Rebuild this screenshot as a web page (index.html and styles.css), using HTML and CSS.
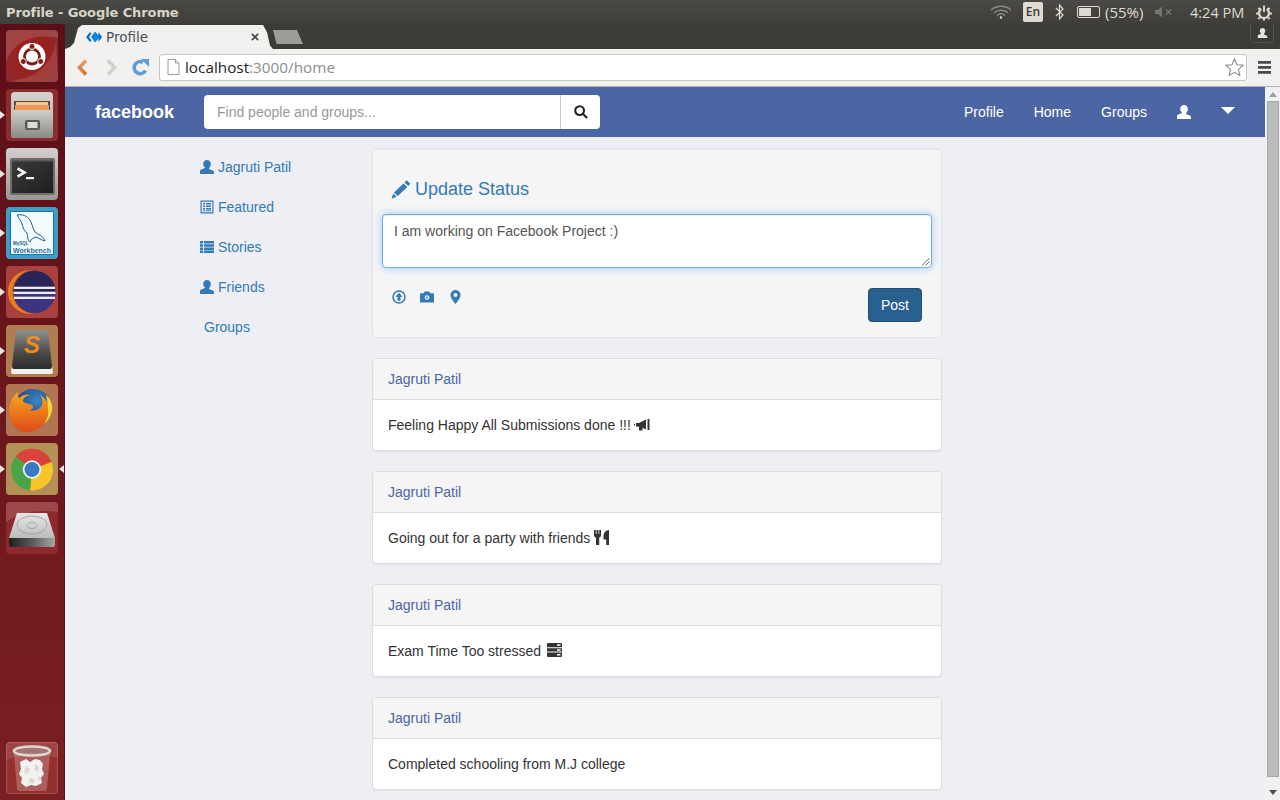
FILE: index.html
```html
<!DOCTYPE html>
<html lang="en">
<head>
<meta charset="utf-8">
<title>Profile</title>
<link rel="stylesheet" href="styles.css">
</head>
<body>
<svg class="defs" width="0" height="0" aria-hidden="true">
  <defs>
    <symbol id="i-user" viewBox="0 0 14 14"><path d="M7 0c2.400 0 3.800 1.700 3.800 4 0 1.700-.7 3.100-1.600 3.800v1c0 .5 1.100.9 2.300 1.300 1.500.5 2.200 1 2.500 1.900V14H0v-3c.3-.9 1-1.400 2.500-1.900 1.200-.4 2.300-.8 2.300-1.300v-1C3.900 7.100 3.200 5.700 3.200 4 3.200 1.700 4.600 0 7 0z"/></symbol>
    <symbol id="i-list" viewBox="0 0 14 12"><path d="M0 0h3v2.500H0zM4 0h10v2.500H4zM0 3.200h3v2.500H0zM4 3.200h10v2.500H4zM0 6.400h3v2.500H0zM4 6.400h10v2.500H4zM0 9.500h3V12H0zM4 9.500h10V12H4z"/></symbol>
    <symbol id="i-news" viewBox="0 0 14 14"><path fill-rule="evenodd" d="M0.500 0.500h13v13h-13zM1.700 1.700v10.600h10.600V1.700zM3 3h2v1.500H3zM6 3h5v1.500H6zM3 5.500h2V7H3zM6 5.500h5V7H6zM3 8h2v1.500H3zM6 8h5v1.500H6zM3 10.300h2v1H3zM6 10.300h5v1H6z"/></symbol>
    <symbol id="i-pencil" viewBox="0 0 20 19"><path d="M15.500 0.300l3.800 3.500-2 2.100-3.800-3.500zM12.500 3.400l3.800 3.500-9.500 9.100-3.800-3.500zM2.300 13.600l3.400 3.100L0.500 18.800z"/></symbol>
  </defs>
</svg>

<div class="screen">
  <header class="sysbar">
    <span class="win-title">Profile - Google Chrome</span>
    <div class="tray">
      <svg class="t-wifi" width="22" height="14" viewBox="0 0 22 14" fill="none" stroke="#8f8d87" stroke-width="1.300"><path d="M1 5c5.500-5 14.500-5 20 0M4 7.800c3.800-3.400 10.200-3.400 14 0M7 10.400c2.300-1.900 5.700-1.900 8 0"/><circle cx="11" cy="12.500" r="1.200" fill="#dfdbd2" stroke="none"/></svg>
      <span class="t-en">En</span>
      <svg class="t-bt" width="9" height="16" viewBox="0 0 9 16" fill="none" stroke="#dfdbd2" stroke-width="1.200"><path d="M1 4l7 7-3.500 4V1L8 5 1 12"/></svg>
      <span class="t-bat"><span class="t-bat-fill"></span></span>
      <span class="t-pct">(55%)</span>
      <svg class="t-mute" width="18" height="12" viewBox="0 0 18 12"><path d="M0 4h3l4-3.500v11L3 8H0z" fill="#77756f"/><path d="M11 3.500l5 5M16 3.500l-5 5" stroke="#77756f" stroke-width="1.500"/></svg>
      <span class="t-time">4:24 PM</span>
      <svg class="t-gear" width="16" height="17" viewBox="0 0 17 17" fill="none" stroke="#dfdbd2"><path d="M5.600 4.700a5.300 5.300 0 1 0 5.800 0" stroke-width="2.400"/><path d="M8.500 1v7" stroke-width="2"/><path d="M2.600 3.600l1.600 1.600M14.400 3.600l-1.600 1.600M0 9.500h2M15 9.500h2M2.500 15.500l1.600-1.600M14.500 15.500l-1.600-1.600M8.500 15.500v1.500" stroke-width="2.200"/></svg>
    </div>
  </header>

  <div class="desktop">
    <nav class="launcher">
      <div class="tile">
        <svg width="52" height="52" viewBox="0 0 52 52"><defs><radialGradient id="gu" cx=".5" cy=".5" r=".7"><stop offset="0" stop-color="#a51818"/><stop offset="1" stop-color="#8a2c2c"/></radialGradient></defs><rect width="52" height="52" rx="4" fill="url(#gu)"/><path d="M0 32C8 10 30 3 52 8V4q0-4-4-4H4Q0 0 0 4z" fill="#fff" opacity=".14"/><path d="M8 50C30 48 46 34 50 12l2 36q0 4-4 4H10z" fill="#fff" opacity=".12"/><circle cx="26" cy="26.500" r="13.500" fill="#fff"/><circle cx="26" cy="26.500" r="7.500" fill="none" stroke="#7d1c1c" stroke-width="2.800"/><circle cx="26" cy="16.500" r="3" fill="#7d1c1c" stroke="#fff"/><circle cx="17.300" cy="31.500" r="3" fill="#7d1c1c" stroke="#fff"/><circle cx="34.700" cy="31.500" r="3" fill="#7d1c1c" stroke="#fff"/></svg>
      </div>
      <div class="tile has-pip">
        <svg width="52" height="52" viewBox="0 0 52 52"><defs><linearGradient id="gf" x1="0" y1="0" x2="0" y2="1"><stop offset="0" stop-color="#d2d0cc"/><stop offset="1" stop-color="#8c8985"/></linearGradient><linearGradient id="gf2" x1="0" y1="0" x2="0" y2="1"><stop offset="0" stop-color="#d6d4d0"/><stop offset="1" stop-color="#a8a6a2"/></linearGradient></defs><rect width="52" height="52" rx="4" fill="#8c2c2c"/><path d="M5 7q0-4 4-4h34q4 0 4 4v39q0 2-2 2H7q-2 0-2-2z" fill="url(#gf2)"/><rect x="8" y="12" width="36" height="11" fill="#5f4b3a"/><rect x="10" y="13" width="32" height="3" fill="#f6c48e"/><rect x="9" y="16" width="34" height="6" fill="#eb9a58"/><rect x="5" y="21" width="42" height="28" rx="2" fill="url(#gf)"/><rect x="19" y="31" width="15" height="10" rx="2" fill="#5c5a56"/><rect x="21.500" y="33" width="10" height="6" fill="#dedcd8"/></svg>
      </div>
      <div class="tile has-pip">
        <svg width="52" height="52" viewBox="0 0 52 52"><defs><linearGradient id="gt" x1="0" y1="0" x2="0" y2="1"><stop offset="0" stop-color="#d2d0cd"/><stop offset="1" stop-color="#999694"/></linearGradient><linearGradient id="gt2" x1="0" y1="0" x2="1" y2="1"><stop offset="0" stop-color="#3c3b3a"/><stop offset="1" stop-color="#1f1e1e"/></linearGradient></defs><rect width="52" height="52" rx="4" fill="url(#gt)"/><rect x="4" y="10" width="45" height="37" rx="2" fill="#6f6d6a"/><rect x="6" y="12" width="41" height="33" fill="url(#gt2)"/><rect x="6" y="12" width="41" height="1.500" fill="#58565a"/><path d="M11.500 20.500l7 4-7 4" fill="none" stroke="#f2f2f2" stroke-width="2.600"/><rect x="20" y="29" width="8" height="2.200" fill="#f2f2f2"/></svg>
      </div>
      <div class="tile has-pip">
        <svg width="52" height="52" viewBox="0 0 52 52"><rect width="52" height="52" rx="4" fill="#3f9ec4"/><rect x="4" y="4" width="44" height="44" rx="1" fill="#0f78b0"/><rect x="5" y="5" width="42" height="42" fill="#f4fbfe"/><path d="M11 8c6-1 10 1 13 5 2 3 2 7 5 12 3 3 8 3 10 9-4-1-6-3-9-4-3 1-5 2-6 5-3-2-2-6-3-9-3-2-4-5-5-9-1-3-3-6-5-9z" fill="none" stroke="#1c5f8e" stroke-width="1"/><text class="wb-my" x="7" y="38">MySQL</text><text class="wb-text" x="7" y="45.500" textLength="38" lengthAdjust="spacingAndGlyphs">Workbench</text></svg>
      </div>
      <div class="tile has-pip">
        <svg width="52" height="52" viewBox="0 0 52 52"><rect width="52" height="52" rx="4" fill="#a9413f"/><circle cx="24" cy="26" r="22" fill="#e8801c"/><circle cx="28.500" cy="25.700" r="22" fill="#a9413f"/><circle cx="28.500" cy="25.700" r="21" fill="#2a2558"/><path d="M7.500 26a21 21 0 0 0 42 0z" fill="#3d3480"/><rect x="8" y="20.700" width="41" height="2.300" fill="#eeedf5"/><rect x="7.500" y="25.700" width="42" height="2.300" fill="#eeedf5"/><rect x="8" y="30.700" width="41" height="2.300" fill="#eeedf5"/></svg>
      </div>
      <div class="tile has-pip">
        <svg width="52" height="52" viewBox="0 0 52 52"><defs><linearGradient id="gs" x1="0" y1="0" x2="0" y2="1"><stop offset="0" stop-color="#8f8f8c"/><stop offset=".6" stop-color="#484847"/><stop offset="1" stop-color="#2c2c2b"/></linearGradient></defs><rect width="52" height="52" rx="4" fill="#ae7d50"/><path d="M6 40h40l1 7q0 2-2 2H7q-2 0-2-2z" fill="#f0f0ee"/><path d="M12 5h28q2 0 2 2l4 34q0 3-2 3H8q-2 0-2-3l4-34q0-2 2-2z" fill="url(#gs)"/><text class="sub-s" x="26" y="28">S</text></svg>
      </div>
      <div class="tile has-pip">
        <svg width="52" height="52" viewBox="0 0 52 52"><defs><linearGradient id="gx" x1="0" y1="0" x2="0" y2="1"><stop offset="0" stop-color="#f7a81f"/><stop offset="1" stop-color="#dd4a18"/></linearGradient><radialGradient id="gb" cx=".6" cy=".3" r=".6"><stop offset="0" stop-color="#3a86c8"/><stop offset="1" stop-color="#1c3f7c"/></radialGradient></defs><rect width="52" height="52" rx="4" fill="#b27551"/><circle cx="27" cy="24" r="19" fill="url(#gb)"/><path d="M12 8c-1 3 0 5 1 6 3-3 7-4 11-3-4 1-7 3-7 6 2 3 6 2 9 4 2 2 1 4-2 5 5 2 10-1 12-5 1-3 0-8-2-10 6 3 10 10 9 17-1 10-10 20-22 20C10 48 3 38 3 27c0-7 3-15 9-19z" fill="url(#gx)"/><path d="M40 11c5 4 7 10 6 16-1 5-4 10-8 13 3-5 5-10 4-15 0-5-1-9-2-14z" fill="#fbd13a"/></svg>
      </div>
      <div class="tile has-pip has-active">
        <svg width="52" height="52" viewBox="0 0 52 52"><rect width="52" height="52" rx="4" fill="#b39157"/><path d="M26 26.500L9.700 13.500A21 21 0 0 1 45.600 19z" fill="#d9433a"/><path d="M26 26.500l19.600-7.500A21 21 0 0 1 24 47.500z" fill="#f6c528"/><path d="M26 26.500l-2 21A21 21 0 0 1 9.700 13.500z" fill="#4aa548"/><circle cx="26" cy="26.500" r="9.200" fill="#f3f3f3"/><circle cx="26" cy="26.500" r="7.500" fill="#3a78c4"/></svg>
      </div>
      <div class="tile">
        <svg width="52" height="52" viewBox="0 0 52 52"><defs><linearGradient id="gd" x1="0" y1="0" x2="0" y2="1"><stop offset="0" stop-color="#e6e6e4"/><stop offset="1" stop-color="#bcbcba"/></linearGradient><linearGradient id="gd2" x1="0" y1="0" x2="1" y2="0"><stop offset="0" stop-color="#1f1f1f"/><stop offset=".5" stop-color="#5a5a5a"/><stop offset="1" stop-color="#a5a5a5"/></linearGradient></defs><rect width="52" height="52" rx="4" fill="#8e2a2c"/><path d="M0 20Q20 6 52 10V4Q52 0 48 0H4Q0 0 0 4z" fill="#fff" opacity=".14"/><path d="M11 11h30l8 25H3z" fill="url(#gd)"/><path d="M3 36h46v7q0 2-2 2H5q-2 0-2-2z" fill="url(#gd2)"/><ellipse cx="26" cy="23" rx="15" ry="9" fill="none" stroke="#a5a5a3"/><ellipse cx="26" cy="23.500" rx="5" ry="3" fill="none" stroke="#a5a5a3"/></svg>
      </div>
      <div class="tile tile-trash">
        <svg width="52" height="52" viewBox="0 0 52 52"><rect width="52" height="52" rx="4" fill="#96302f"/><rect x=".5" y=".5" width="51" height="51" rx="4" fill="none" stroke="#fff" stroke-opacity=".15"/><path d="M0 4Q0 0 4 0h44q4 0 4 4v12Q26 8 0 18z" fill="#fff" opacity=".1"/><path d="M8 11l3 35q0 3 3 3h24q3 0 3-3l3-35z" fill="#fff" opacity=".22"/><path d="M14 20l6-3 4 3 5-3 5 1 3 4-1 5 2 5-3 4 1 5-6 3-5-1-5 2-5-4 1-5-3-4 2-5z" fill="#f2f1ef"/><path d="M20 24l4 3-2 5-4-2zM29 22l4 3-1 5-4-2zM24 36l5 1-2 5-4-2zM33 33l2 4-4 2z" fill="#dcd8d5"/><ellipse cx="26" cy="9" rx="18" ry="4.500" fill="#a8a3a0" fill-opacity=".5" stroke="#dcd8d4" stroke-width="2.600"/></svg>
      </div>
    </nav>

    <div class="browser">
      <div class="tabstrip">
        <div class="tab">
          <svg class="tab-ico" width="16" height="12" viewBox="0 0 16 12"><path d="M4 1L0 6l4 5 1.500-1.500L3 6l2.500-3.500z" fill="#0d6fbf"/><path d="M9 0.500l5 5.500-5 5.500-4-5.500z" fill="#1481d8"/><path d="M12.500 1l3.500 5-3.500 5z" fill="#0d6fbf"/></svg>
          <span class="tab-title">Profile</span>
          <svg class="tab-x" width="8" height="8" viewBox="0 0 8 8"><path d="M.8.800l6.400 6.400M7.200.800L.8 7.200" stroke="#4a4a48" stroke-width="1.700"/></svg>
        </div>
        <div class="newtab"></div>
        <div class="profile-btn">
          <svg width="11" height="10" viewBox="0 0 14 14" fill="#e6e4de"><use href="#i-user"/></svg>
        </div>
      </div>

      <div class="toolbar">
        <svg class="tb-back" width="13" height="17" viewBox="0 0 13 17"><defs><linearGradient id="gback" x1="0" y1="0" x2="0" y2="1"><stop offset="0" stop-color="#e9a070"/><stop offset="1" stop-color="#dd6a2c"/></linearGradient></defs><path d="M10 1.500L3.500 8.500 10 15.500" fill="none" stroke="url(#gback)" stroke-width="3.600"/></svg>
        <svg class="tb-fwd" width="13" height="17" viewBox="0 0 13 17"><path d="M3 1.500L9.500 8.500 3 15.500" fill="none" stroke="#d2d0cc" stroke-width="3.600"/></svg>
        <svg class="tb-reload" width="17" height="17" viewBox="0 0 17 17"><path d="M13.500 11.500A6 6 0 1 1 11 3.300" fill="none" stroke="#5c9fd8" stroke-width="3.600"/><path d="M9 0h8v8z" fill="#5c9fd8"/></svg>
        <div class="omnibox">
          <svg class="omni-page" width="13" height="16" viewBox="0 0 13 16"><path d="M1 .5h7.500L12 4v11.500H1z" fill="#fff" stroke="#9c9c9c"/><path d="M8.500.5V4H12" fill="#e8e8e8" stroke="#9c9c9c"/></svg>
          <span class="omni-url"><span class="omni-host">localhost</span>:3000/home</span>
          <svg class="omni-star" width="19" height="18" viewBox="0 0 19 18"><path d="M9.500 1l2.500 5.700 6 .6-4.500 4.100 1.300 6-5.300-3.100-5.300 3.100 1.300-6L1 7.300l6-.6z" fill="#fff" stroke="#8a8a8a" stroke-width="1.100"/></svg>
        </div>
        <svg class="tb-menu" width="13" height="13" viewBox="0 0 13 13"><path d="M0 0h13v2.700H0zM0 5h13v2.700H0zM0 10h13v2.700H0z" fill="#4a4a48"/></svg>
      </div>

      <div class="viewport">
        <div class="page">
          <div class="navbar">
            <a class="brand">facebook</a>
            <form class="search">
              <span class="search-input">Find people and groups...</span>
              <span class="search-btn">
                <svg width="14" height="14" viewBox="0 0 14 14" fill="none" stroke="#222" stroke-width="2.100"><circle cx="5.600" cy="5.600" r="4.400"/><path d="M8.800 8.800l4.300 4.300"/></svg>
              </span>
            </form>
            <ul class="navlinks">
              <li>Profile</li>
              <li>Home</li>
              <li>Groups</li>
              <li><svg class="nav-user" width="14" height="14" fill="#fff"><use href="#i-user"/></svg></li>
              <li><span class="nav-caret"></span></li>
            </ul>
          </div>

          <div class="content">
            <ul class="sidenav">
              <li><svg class="side-ico" width="14" height="14"><use href="#i-user"/></svg>Jagruti Patil</li>
              <li><svg class="side-ico" width="14" height="14"><use href="#i-news"/></svg>Featured</li>
              <li><svg class="side-ico" width="14" height="12"><use href="#i-list"/></svg>Stories</li>
              <li><svg class="side-ico" width="14" height="14"><use href="#i-user"/></svg>Friends</li>
              <li class="side-plain">Groups</li>
            </ul>

            <main class="feed">
              <section class="well">
                <h4 class="well-title"><svg class="pencil" width="20" height="19"><use href="#i-pencil"/></svg>Update Status</h4>
                <div class="status-box">I am working on Facebook Project :)
                  <svg class="grip" width="9" height="9" viewBox="0 0 9 9"><path d="M8.500 1L1 8.500M8.500 4.500L4.500 8.500" stroke="#666" stroke-width="1"/></svg>
                </div>
                <div class="well-foot">
                  <div class="well-icons">
                    <svg width="14" height="14" viewBox="0 0 14 14"><circle cx="7" cy="7" r="6" fill="none" stroke="#337ab7" stroke-width="1.500"/><path d="M7 2.800L10.600 6.800H8.500V10.800H5.500V6.800H3.400z" fill="#337ab7"/></svg>
                    <svg width="14" height="12" viewBox="0 0 15 12"><path fill-rule="evenodd" d="M1 2h3l1-2h5l1 2h3q1 0 1 1v8q0 1-1 1H1q-1 0-1-1V3q0-1 1-1zM7.500 4a2.500 2.500 0 1 0 0 5 2.500 2.500 0 0 0 0-5zM7.500 5.500a1 1 0 1 1 0 2 1 1 0 0 1 0-2z" fill="#337ab7"/></svg>
                    <svg class="pin" width="11" height="14" viewBox="0 0 11 14"><path fill-rule="evenodd" d="M5.500 0a5 5 0 0 1 5 5c0 3-3 6.500-5 9-2-2.500-5-6-5-9a5 5 0 0 1 5-5zM5.500 3a2 2 0 1 0 0 4 2 2 0 0 0 0-4z" fill="#337ab7"/></svg>
                  </div>
                  <button class="post-btn" type="button">Post</button>
                </div>
              </section>

              <article class="card">
                <div class="card-head">Jagruti Patil</div>
                <div class="card-body">Feeling Happy All Submissions done !!! <svg class="c-ico c-ico-back" width="16" height="12" viewBox="0 0 16 12"><path d="M0 5h1v1.500H0zM2 4h3l7-3.500v10L8.500 8.800V11.500h-3.500V7.800L2 7.500zM13.500 0h2v11h-2z" fill="#333"/></svg></div>
              </article>
              <article class="card">
                <div class="card-head">Jagruti Patil</div>
                <div class="card-body">Going out for a party with friends <svg class="c-ico c-ico-low" width="15" height="15" viewBox="0 0 15 15"><path d="M0 0h1.700v4h.8V0h2v4h.8V0H7v5.500q0 1.500-1.800 2.200V15H2V7.700Q0 7 0 5.500zM15 0v15h-2.800V9.500H9.500V6c0-3 2.500-6 5.500-6z" fill="#333"/></svg></div>
              </article>
              <article class="card">
                <div class="card-head">Jagruti Patil</div>
                <div class="card-body">Exam Time Too stressed <svg class="c-ico c-ico-shift" width="15" height="14" viewBox="0 0 15 14"><path fill-rule="evenodd" d="M1 0h13q1 0 1 1v3.200H0V1q0-1 1-1zM0 5.200h15v3.400H0zM0 9.600h15V13q0 1-1 1H1q-1 0-1-1zM10 1.300v1.500h3.500V1.300zM10 6.200v1.500h3.500V6.200zM10 11v1.500h3.500V11z" fill="#333"/></svg></div>
              </article>
              <article class="card">
                <div class="card-head">Jagruti Patil</div>
                <div class="card-body">Completed schooling from M.J college</div>
              </article>
            </main>
          </div>
        </div>
        <div class="scrollbar">
          <span class="sb-up"></span>
          <span class="sb-thumb"></span>
          <span class="sb-down"></span>
        </div>
      </div>
    </div>
  </div>
</div>
</body>
</html>
```

FILE: styles.css
```css
* { box-sizing: border-box; }
html, body { margin: 0; padding: 0; height: 100%; overflow: hidden; }
body { font-family: "Liberation Sans", Arial, sans-serif; font-size: 14px; color: #333; }
ul { list-style: none; margin: 0; padding: 0; }
.defs { position: absolute; }

.screen { width: 1280px; height: 800px; display: flex; flex-direction: column; background: #3c3b37; }

/* system bar */
.sysbar { height: 24px; flex: none; display: flex; align-items: center; justify-content: space-between; padding: 0 8px 0 6px; background: linear-gradient(#4a4943, #3f3e39); }
.win-title { font-family: "DejaVu Sans", sans-serif; font-weight: bold; font-size: 13px; color: #d8d4c8; letter-spacing: -0.1px; }
.tray { display: flex; align-items: center; font-family: "Open Sans", sans-serif; font-size: 15px; color: #dfdbd2; }
.t-en { width: 20px; height: 20px; margin-left: 11px; background: #dfdbd2; color: #3c3b37; border-radius: 2px; font-size: 12px; font-weight: 600; text-align: center; line-height: 20px; }
.t-bt { margin-left: 12px; }
.t-bat { width: 23px; height: 12px; margin-left: 13px; border: 1px solid #dfdbd2; border-radius: 2px; padding: 1px; display: flex; }
.t-bat-fill { width: 65%; background: #dfdbd2; }
.t-pct { margin-left: 5px; width: 38px; white-space: nowrap; }
.t-mute { margin-left: 12px; }
.t-time { margin-left: 17px; width: 53px; white-space: nowrap; font-size: 14.500px; }
.t-gear { margin-left: 13px; }

.desktop { flex: 1; display: flex; min-height: 0; }

/* launcher */
.launcher { width: 65px; flex: none; display: flex; flex-direction: column; gap: 7px; padding: 6px 7px 6px 6px; background: linear-gradient(#5c0e17, #7a2022); border-right: 1px solid #54141a; }
.tile { width: 52px; height: 52px; flex: none; position: relative; }
.tile svg { display: block; }
.tile-trash { margin-top: auto; }
.has-pip::before { content: ""; position: absolute; left: -6px; top: 22px; border: 4px solid transparent; border-left: 5px solid #e8e4e0; border-right: 0; }
.has-active::after { content: ""; position: absolute; right: -6px; top: 22px; border: 4px solid transparent; border-right: 5px solid #e8e4e0; border-left: 0; }
.wb-my { font-family: "Liberation Sans", sans-serif; font-size: 4.500px; font-weight: bold; fill: #1c5f8e; }
.wb-text { font-family: "Liberation Sans", sans-serif; font-size: 7.500px; font-weight: bold; fill: #1b6fa0; }
.sub-s { font-family: "Liberation Sans", sans-serif; font-size: 24px; font-weight: bold; font-style: italic; fill: #f08a1e; text-anchor: middle; }

/* browser chrome */
.browser { flex: 1; min-width: 0; display: flex; flex-direction: column; }
.tabstrip { height: 25px; flex: none; display: flex; align-items: flex-end; background: #3c3b37; }
.tab { width: 208px; height: 24px; display: flex; align-items: center; padding: 0 14px 0 21px; background: #f2f1f0; clip-path: polygon(0 100%, 5px 92%, 9px 75%, 13px 12%, 17px 0, calc(100% - 10px) 0, calc(100% - 6px) 30%, calc(100% - 3px) 85%, 100% 100%); }
.tab-ico { flex: none; }
.tab-title { flex: 1; margin-left: 4px; font-family: "DejaVu Sans", sans-serif; font-size: 13.500px; color: #4a5058; }
.newtab { width: 30px; height: 14px; margin: 0 0 5px 0; background: #9e9c96; clip-path: polygon(0 0, 80% 0, 100% 100%, 12% 100%); }
.profile-btn { width: 24px; height: 19px; margin-left: auto; margin-right: 6px; align-self: flex-start; display: flex; align-items: center; justify-content: center; background: #3c3b37; border: 1px solid #54534e; border-top: 0; border-radius: 0 0 5px 5px; }
.toolbar { height: 38px; flex: none; display: flex; align-items: center; padding: 0 8px 1px 11px; background: #f2f1f0; border-bottom: 1px solid #b4b2ae; }
.tb-fwd { margin-left: 16px; }
.tb-reload { margin-left: 14px; }
.omnibox { width: 1088px; height: 27px; margin-left: 10px; display: flex; align-items: center; padding: 0 2px 0 7px; background: #fff; border: 1px solid #c8c6c2; border-radius: 3px; }
.omni-url { flex: 1; margin-left: 5px; margin-top: -1px; font-family: "Open Sans", sans-serif; font-size: 15.300px; color: #8e8e8e; }
.omni-host { color: #222; }
.tb-menu { margin-left: 11px; }

/* page */
.viewport { flex: 1; min-height: 0; display: flex; }
.page { flex: 1; min-width: 0; background: #edeff4; overflow: hidden; }
.navbar { height: 50px; display: flex; align-items: center; padding: 0 30px; background: #4c66a4; color: #fff; }
.brand { width: 109px; font-size: 18px; font-weight: bold; color: #fff; }
.search { width: 396px; height: 34px; display: flex; background: #fff; border-radius: 4px; }
.search-input { flex: 1; padding-left: 13px; line-height: 34px; color: #999; }
.search-btn { width: 40px; display: flex; align-items: center; justify-content: center; border-left: 1px solid #ccc; }
.navlinks { margin-left: auto; display: flex; align-items: center; gap: 30px; }
.navlinks li { display: flex; align-items: center; }
.nav-user { margin-top: -1px; }
.nav-caret { width: 0; height: 0; border: 7px solid transparent; border-top: 7px solid #fff; border-bottom: 0; margin-top: -3px; }

.content { display: flex; padding-left: 135px; }
.sidenav { width: 172px; padding-top: 10px; color: #337ab7; }
.sidenav li { height: 40px; display: flex; align-items: center; }
.side-ico { fill: #337ab7; margin-right: 4px; margin-top: -1px; flex: none; }
.side-plain { padding-left: 4px; }

.feed { width: 570px; padding-top: 11px; display: flex; flex-direction: column; gap: 20px; }
.well { height: 190px; padding: 0 9px; background: #f5f5f5; border: 1px solid #e3e3e3; border-radius: 4px; box-shadow: inset 0 1px 1px rgba(0,0,0,.05); }
.well-title { margin: 29px 0 14px 9px; height: 22px; display: flex; align-items: center; font-size: 18px; font-weight: normal; color: #337ab7; }
.pencil { fill: #337ab7; margin-right: 4px; flex: none; }
.status-box { position: relative; height: 54px; padding: 6px 11px; line-height: 20px; color: #555; background: #fff; border: 1px solid #66afe9; border-radius: 4px; box-shadow: inset 0 1px 1px rgba(0,0,0,.075), 0 0 8px rgba(102,175,233,.6); }
.grip { position: absolute; right: 1px; bottom: 1px; }
.well-foot { display: flex; justify-content: space-between; align-items: flex-start; padding: 20px 10px 0 10px; }
.well-icons { display: flex; align-items: center; gap: 14px; margin-top: 2px; }
.pin { margin-left: 2px; }
.post-btn { width: 54px; height: 34px; padding: 0; font: inherit; color: #fff; background: #286090; border: 1px solid #204d74; border-radius: 4px; }

.card { height: 93px; background: #fff; border: 1px solid #ddd; border-radius: 4px; box-shadow: 0 1px 1px rgba(0,0,0,.05); overflow: hidden; }
.card-head { height: 41px; padding: 0 15px; line-height: 40px; color: #4c66a4; background: #f5f5f5; border-bottom: 1px solid #ddd; }
.card-body { height: 50px; padding: 0 15px; line-height: 51px; }
.c-ico { vertical-align: -1px; }
.c-ico-back { margin-left: -1px; }
.c-ico-low { vertical-align: -2px; }
.c-ico-shift { margin-left: 2px; vertical-align: -1px; }

/* scrollbar */
.scrollbar { width: 15px; flex: none; display: flex; flex-direction: column; align-items: center; background: #f1f1f1; }
.sb-up { margin-top: 5px; border: 4px solid transparent; border-bottom: 5px solid #a0a0a0; border-top: 0; }
.sb-thumb { width: 12px; height: 676px; margin-top: 4px; background: #bcbcbc; border: 1px solid #a8a8a8; }
.sb-down { margin-top: auto; margin-bottom: 5px; border: 4px solid transparent; border-top: 5px solid #505050; border-bottom: 0; }
```
